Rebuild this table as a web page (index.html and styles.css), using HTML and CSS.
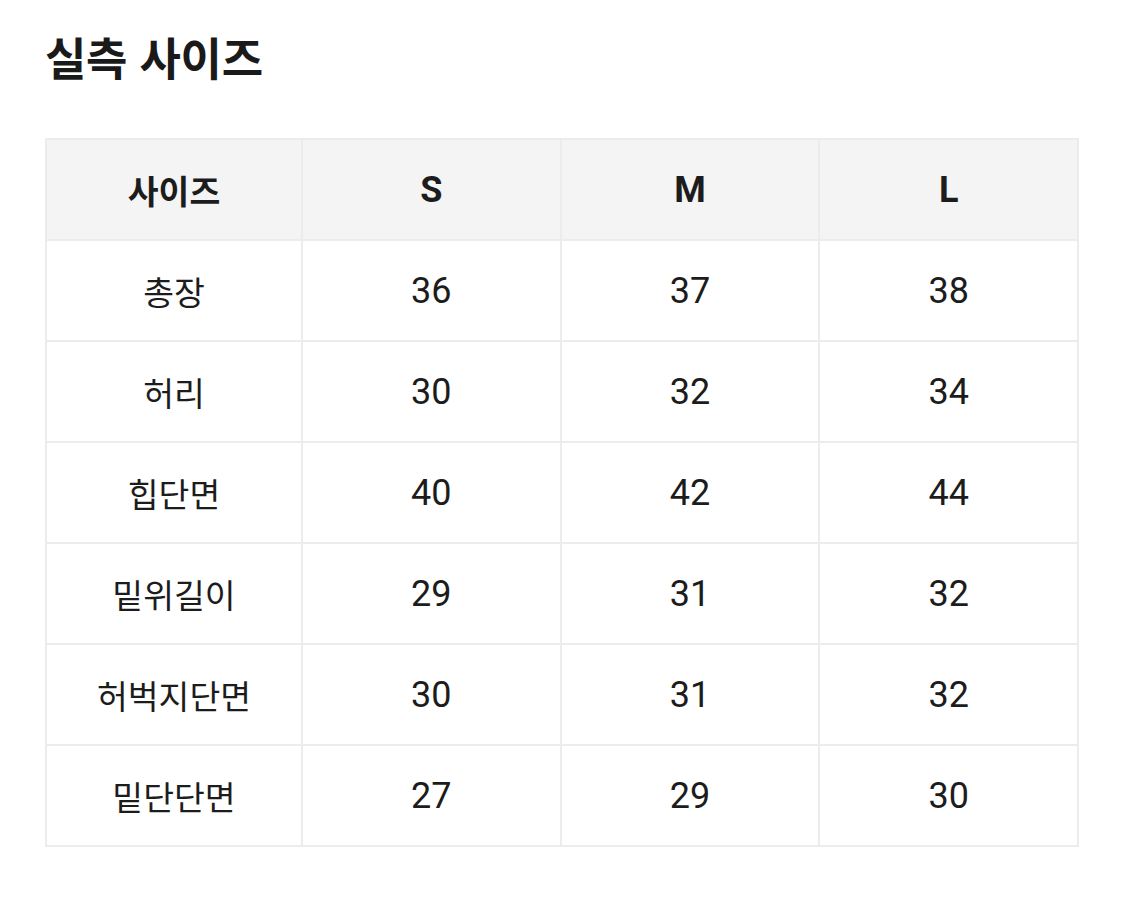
FILE: index.html
```html
<!DOCTYPE html>
<html lang="ko">
<head>
<meta charset="utf-8">
<title>실측 사이즈</title>
<link rel="stylesheet" href="styles.css">
</head>
<body>
<main class="page">
  <h1 class="title">실측 사이즈</h1>
  <table class="size-table">
    <colgroup>
      <col class="col-label">
      <col>
      <col>
      <col>
    </colgroup>
    <thead>
      <tr>
        <th class="ko">사이즈</th>
        <th class="num">S</th>
        <th class="num">M</th>
        <th class="num">L</th>
      </tr>
    </thead>
    <tbody>
      <tr><td class="ko">총장</td><td class="num">36</td><td class="num">37</td><td class="num">38</td></tr>
      <tr><td class="ko">허리</td><td class="num">30</td><td class="num">32</td><td class="num">34</td></tr>
      <tr><td class="ko">힙단면</td><td class="num">40</td><td class="num">42</td><td class="num">44</td></tr>
      <tr><td class="ko">밑위길이</td><td class="num">29</td><td class="num">31</td><td class="num">32</td></tr>
      <tr><td class="ko">허벅지단면</td><td class="num">30</td><td class="num">31</td><td class="num">32</td></tr>
      <tr><td class="ko">밑단단면</td><td class="num">27</td><td class="num">29</td><td class="num">30</td></tr>
    </tbody>
  </table>
</main>
</body>
</html>
```
FILE: styles.css
```css
html, body {
  margin: 0;
  padding: 0;
  background: #ffffff;
}

.page {
  padding: 26px 46px 0 45px;
  font-family: "Noto Sans CJK KR", "Noto Sans", sans-serif;
  color: #1c1c1c;
}

.title {
  margin: 0 0 50px 0;
  font-size: 45px;
  line-height: 62px;
  font-weight: 700;
  letter-spacing: -0.3px;
  color: #1a1a1a;
}

.size-table {
  width: 1034px;
  border-collapse: collapse;
  table-layout: fixed;
  border: 2px solid #ececec;
}

.col-label {
  width: 256px;
}

.size-table th,
.size-table td {
  height: 99px;
  padding: 0;
  border: 2px solid #ececec;
  text-align: center;
  vertical-align: middle;
  font-weight: 400;
}

.size-table thead th {
  background: #f4f4f4;
  font-weight: 700;
}

.ko {
  font-family: "Noto Sans CJK KR", sans-serif;
  font-size: 33.5px;
}

.num {
  font-family: Roboto, "Liberation Sans", sans-serif;
  font-size: 36px;
}

thead .ko {
  font-weight: 700;
}
```
